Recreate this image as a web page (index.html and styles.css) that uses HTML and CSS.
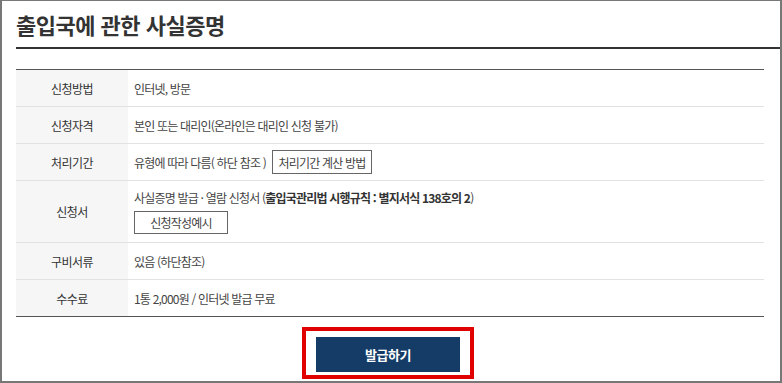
FILE: index.html
```html
<!DOCTYPE html>
<html lang="ko">
  <head>
    <meta charset="utf-8" />
    <title>출입국에 관한 사실증명</title>
    <meta name="viewport" content="width=device-width, initial-scale=1.0" />
    <link rel="stylesheet" href="styles.css">
  </head>
  <body>
    <div class="frame">
      <h1 class="title">출입국에 관한 사실증명</h1>

      <div class="info">
        <div class="row">
          <div class="label">신청방법</div>
          <div class="value">인터넷, 방문</div>
        </div>
        <div class="row">
          <div class="label">신청자격</div>
          <div class="value">본인 또는 대리인(온라인은 대리인 신청 불가)</div>
        </div>
        <div class="row">
          <div class="label">처리기간</div>
          <div class="value">
            유형에 따라 다름( 하단 참조 )
            <button class="btn-line btn-calc">처리기간 계산 방법</button>
          </div>
        </div>
        <div class="row row-tall">
          <div class="label">신청서</div>
          <div class="value value-stack">
            <p>사실증명 발급 · 열람 신청서 (<b>출입국관리법 시행규칙 : 별지서식 138호의 2</b>)</p>
            <button class="btn-line btn-sample">신청작성예시</button>
          </div>
        </div>
        <div class="row">
          <div class="label">구비서류</div>
          <div class="value">있음 (하단참조)</div>
        </div>
        <div class="row">
          <div class="label">수수료</div>
          <div class="value">1통 2,000원 / 인터넷 발급 무료</div>
        </div>
      </div>

      <div class="actions">
        <div class="highlight">
          <button class="btn-issue">발급하기</button>
        </div>
      </div>
    </div>
  </body>
</html>
```

FILE: styles.css
```css
body {
  margin: 0;
  font-family: "Noto Sans CJK KR", "Noto Sans", sans-serif;
  color: #333;
  background: #fff;
}

.frame {
  width: 782px;
  height: 383px;
  box-sizing: border-box;
  border: 2px solid #777;
  border-top-width: 1px;
  padding-left: 14px;
  overflow: hidden;
}

.title {
  margin: 0;
  padding: 9px 0;
  font-size: 22px;
  line-height: 28px;
  font-weight: 700;
  letter-spacing: -0.5px;
  color: #333;
  border-bottom: 2px solid #333;
}

/**
 * Info table
 */
.info {
  width: 748px;
  margin-top: 20px;
  border-top: 1px solid #555;
  font-size: 12px;
  letter-spacing: -0.8px;
}

.row {
  display: flex;
  min-height: 36px;
  border-bottom: 1px solid #e2e2e2;
}

.row:last-child {
  border-bottom-color: #555;
}

.row-tall {
  min-height: 61px;
}

.label {
  width: 112px;
  flex: none;
  display: flex;
  align-items: center;
  justify-content: center;
  background: #f6f6f6;
  color: #333;
  letter-spacing: -0.6px;
}

.value {
  flex: 1;
  display: flex;
  align-items: center;
  gap: 6px;
  padding: 0 6px;
  color: #444;
}

.value-stack {
  flex-direction: column;
  align-items: flex-start;
  gap: 4px;
  padding-top: 8px;
  padding-bottom: 8px;
}

.value-stack p {
  margin: 0;
  line-height: 18px;
}

.value-stack b {
  color: #333;
}

.btn-line {
  height: 24px;
  padding: 0;
  background: #fff;
  border: 1px solid #666;
  font-family: inherit;
  font-size: 12px;
  letter-spacing: -0.8px;
  color: #444;
}

.btn-calc {
  width: 100px;
}

.btn-sample {
  width: 94px;
  height: 23px;
}

/**
 * Issue button
 */
.actions {
  width: 748px;
  display: flex;
  justify-content: center;
  padding-top: 10px;
  padding-right: 4px;
  box-sizing: border-box;
}

.highlight {
  border: 4px solid #e00000;
  padding: 6px 10px 3px;
}

.btn-issue {
  display: block;
  width: 144px;
  height: 35px;
  background: #143c67;
  border: none;
  color: #fff;
  font-family: inherit;
  font-size: 13px;
  font-weight: 700;
  letter-spacing: -0.5px;
}
```
